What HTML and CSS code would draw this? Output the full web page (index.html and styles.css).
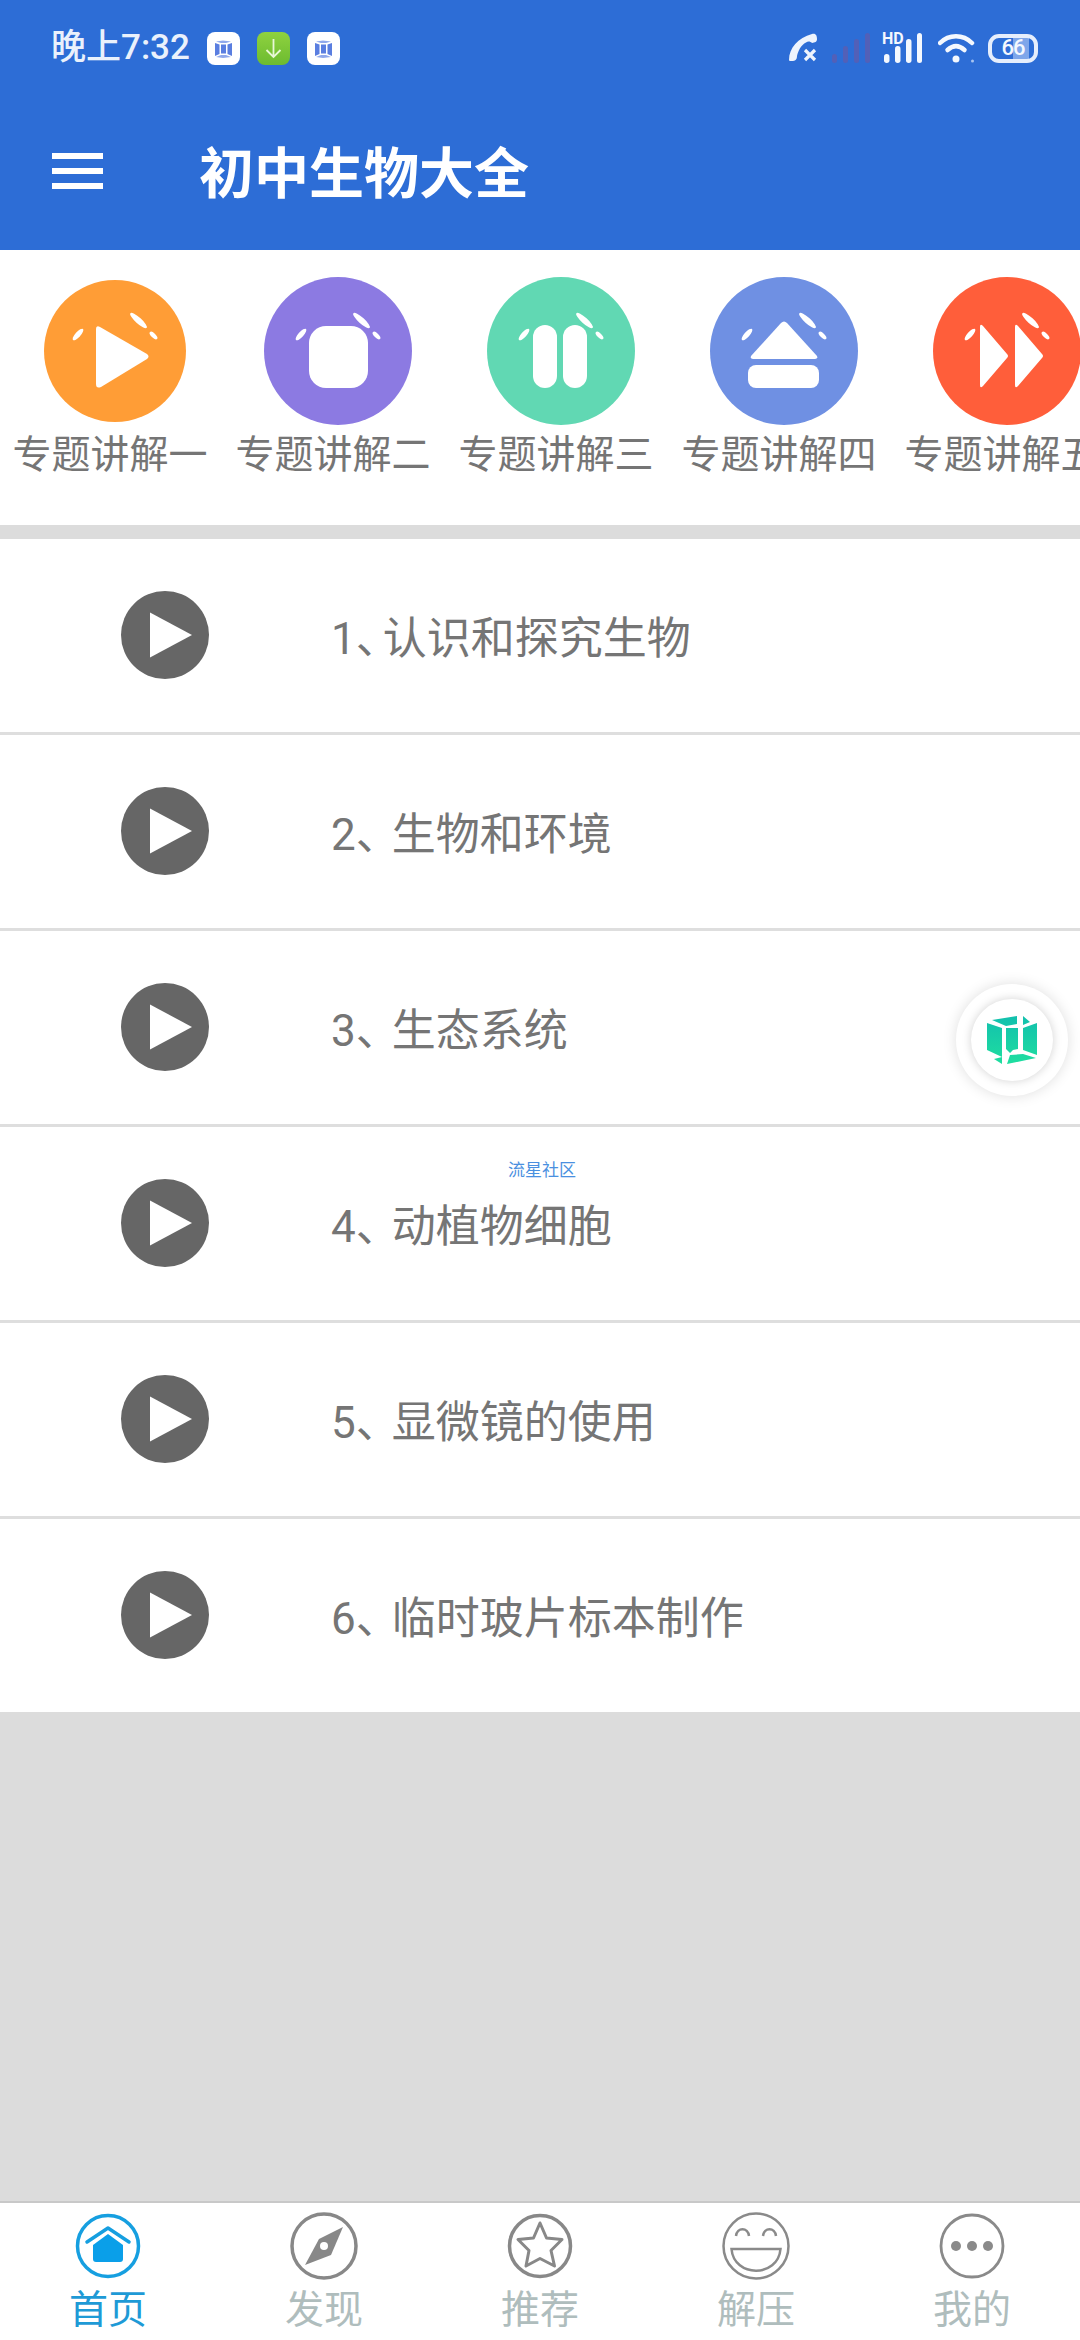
FILE: index.html
```html
<!DOCTYPE html>
<html lang="zh-CN">
<head>
<meta charset="utf-8">
<title>初中生物大全</title>
<link rel="stylesheet" href="styles.css">
</head>
<body>
<svg class="defs" width="0" height="0" aria-hidden="true">
  <defs>
    <linearGradient id="cubeGrad" gradientUnits="userSpaceOnUse" x1="0" y1="0" x2="0" y2="50">
      <stop offset="0" stop-color="#12bfae"/>
      <stop offset="1" stop-color="#1fdf9f"/>
    </linearGradient>
    <linearGradient id="greenGrad" x1="0" y1="0" x2="0" y2="1">
      <stop offset="0" stop-color="#8fd23f"/>
      <stop offset="1" stop-color="#6cbb30"/>
    </linearGradient>
    <symbol id="gloss" viewBox="-74 -74 148 148">
      <ellipse cx="23.500" cy="-30.500" rx="11" ry="3" transform="rotate(42 23.500 -30.500)" fill="#fff"/>
      <ellipse cx="38.500" cy="-15.500" rx="5" ry="2.200" transform="rotate(45 38.500 -15.500)" fill="#fff"/>
      <ellipse cx="-37" cy="-16.500" rx="7.500" ry="2.600" transform="rotate(-48 -37 -16.500)" fill="#fff"/>
    </symbol>
    <symbol id="play" viewBox="0 0 88 88">
      <circle cx="44" cy="44" r="44" fill="#666"/>
      <path d="M29 21.500 L71 44 L29 66.500Z" fill="#fff"/>
    </symbol>
    <symbol id="cube" viewBox="0 0 52 50">
      <path d="M1 8 L16 13 V42 L1 35Z M37 13 L51 8 V40 L37 35Z" fill="url(#cubeGrad)"/>
      <path d="M6 5 L31 1 V9 L20 11Z M37 1 L44 7 L37 10Z" fill="url(#cubeGrad)"/>
      <path d="M20 13 H32 V34 L27 35 L24 38 L20 34Z" fill="url(#cubeGrad)"/>
      <path d="M8 44 L16 42 V49Z M21 49 L24 40 L37 39 L50 43Z" fill="url(#cubeGrad)"/>
    </symbol>
    <symbol id="miniCube" viewBox="0 0 33 33">
      <path d="M8 11 L12.500 12.500 V22 L8 24Z M25 11 L20.500 12.500 V22 L25 24Z M14 12.500 H19 V21.500 H14Z" fill="#5a7ee0"/>
      <path d="M9 9.500 L16 8.500 L24 9.500 L19 11 H14Z M9 25 L14 23 H19 L24 25 L16 26Z" fill="#8fa8ec"/>
    </symbol>
  </defs>
</svg>

<div class="app">
  <header class="header">
    <div class="status">
      <div class="status-left">
        <span class="time">晚上7:32</span>
        <svg class="note" viewBox="0 0 33 33"><rect width="33" height="33" rx="8" fill="#fff"/><use href="#miniCube" width="33" height="33"/></svg>
        <svg class="note" viewBox="0 0 33 33"><rect width="33" height="33" rx="8" fill="url(#greenGrad)"/><path d="M16.500 7 V25 M9.500 18 L16.500 25 L23.500 18" stroke="#e8f7d6" stroke-width="1.800" fill="none"/></svg>
        <svg class="note" viewBox="0 0 33 33"><rect width="33" height="33" rx="8" fill="#fff"/><use href="#miniCube" width="33" height="33"/></svg>
      </div>
      <div class="status-right">
        <svg class="phone" viewBox="0 0 30 30" width="30" height="30"><path d="M1 27 C1 15 10 5 24 1 C28 0 29 3 29 6 C29 9 27 9.500 24 10 C22 8 20 8 18 9.500 C13 12 10 18 9 23 C9 27 7 28 4 28 C2 28 1 28 1 27Z" fill="#eef4fd"/><path d="M17 17 L27 27 M27 17 L17 27" stroke="#eef4fd" stroke-width="3.200"/></svg>
        <svg class="bars-dim" viewBox="0 0 38 30" width="38" height="30"><g fill="#5260b8"><rect x="0" y="21" width="5" height="9" rx="2.500"/><rect x="11" y="13" width="5" height="17" rx="2.500"/><rect x="22" y="6" width="5" height="24" rx="2.500"/><rect x="33" y="0" width="5" height="30" rx="2.500"/></g></svg>
        <span class="signal">
          <span class="hd">HD</span>
          <svg class="bars" viewBox="0 0 40 30" width="40" height="30"><g fill="#f4f8fe"><rect x="2" y="21" width="5.500" height="9" rx="2.700"/><rect x="13" y="13" width="5.500" height="17" rx="2.700"/><rect x="24" y="6" width="5.500" height="24" rx="2.700"/><rect x="35" y="0" width="5" height="30" rx="2.500"/></g></svg>
        </span>
        <svg class="wifi" viewBox="0 0 38 30" width="38" height="30"><path d="M2 10 C11 1 25 1 34 10" stroke="#f4f8fe" stroke-width="4.500" stroke-linecap="round" fill="none"/><path d="M9.500 17 C15 12 21 12 26.500 17" stroke="#f4f8fe" stroke-width="4.500" stroke-linecap="round" fill="none"/><circle cx="18" cy="26" r="3.500" fill="#f4f8fe"/><circle cx="34.500" cy="28" r="1.500" fill="#a9c4f0"/></svg>
        <span class="battery">66</span>
      </div>
    </div>
    <div class="toolbar">
      <div class="menu"><i></i><i></i><i></i></div>
      <h1 class="title">初中生物大全</h1>
    </div>
  </header>

  <nav class="topics">
    <div class="topic">
      <svg class="topic-icon" viewBox="-74 -74 148 148"><circle r="71" fill="#ff9d36"/><path d="M-19 -22 Q-19 -26 -15 -24 L32 3 Q35 5.500 32 8 L-14 36 Q-19 38 -19 33Z" fill="#fff"/><use href="#gloss" x="-74" y="-74" width="148" height="148"/></svg>
      <span class="topic-label">专题讲解一</span>
    </div>
    <div class="topic">
      <svg class="topic-icon" viewBox="-74 -74 148 148"><circle r="74" fill="#8c7ae2"/><rect x="-29" y="-25" width="59" height="62" rx="17" fill="#fff"/><use href="#gloss" x="-74" y="-74" width="148" height="148"/></svg>
      <span class="topic-label">专题讲解二</span>
    </div>
    <div class="topic">
      <svg class="topic-icon" viewBox="-74 -74 148 148"><circle r="74" fill="#61d8b3"/><rect x="-28" y="-26" width="24" height="63" rx="12" fill="#fff"/><rect x="2" y="-26" width="24" height="63" rx="12" fill="#fff"/><use href="#gloss" x="-74" y="-74" width="148" height="148"/></svg>
      <span class="topic-label">专题讲解三</span>
    </div>
    <div class="topic">
      <svg class="topic-icon" viewBox="-74 -74 148 148"><circle r="74" fill="#6f90e3"/><path d="M-3 -28 Q0 -31 3 -28 L33 5 Q34 8 31 8 H-31 Q-34 8 -33 5Z" fill="#fff"/><rect x="-36" y="14" width="71" height="23" rx="8" fill="#fff"/><use href="#gloss" x="-74" y="-74" width="148" height="148"/></svg>
      <span class="topic-label">专题讲解四</span>
    </div>
    <div class="topic">
      <svg class="topic-icon" viewBox="-74 -74 148 148"><circle r="74" fill="#ff5e3a"/><path d="M-27 -24 Q-27 -28 -24 -25 L0 3 Q2 5 0 7 L-24 35 Q-27 38 -27 34Z M8 -24 Q8 -28 11 -25 L35 3 Q37 5 35 7 L11 35 Q8 38 8 34Z" fill="#fff"/><use href="#gloss" x="-74" y="-74" width="148" height="148"/></svg>
      <span class="topic-label">专题讲解五</span>
    </div>
  </nav>

  <main class="list">
    <div class="row"><svg class="play"><use href="#play"/></svg><span class="row-text">1<span class="sep tight">、</span>认识和探究生物</span></div>
    <div class="row"><svg class="play"><use href="#play"/></svg><span class="row-text">2<span class="sep">、</span>生物和环境</span></div>
    <div class="row"><svg class="play"><use href="#play"/></svg><span class="row-text">3<span class="sep">、</span>生态系统</span></div>
    <div class="row"><svg class="play"><use href="#play"/></svg><span class="row-text">4<span class="sep">、</span>动植物细胞</span></div>
    <div class="row"><svg class="play"><use href="#play"/></svg><span class="row-text">5<span class="sep">、</span>显微镜的使用</span></div>
    <div class="row"><svg class="play"><use href="#play"/></svg><span class="row-text">6<span class="sep">、</span>临时玻片标本制作</span></div>
  </main>

  <footer class="tabs">
    <div class="tab active">
      <svg class="tab-icon" viewBox="0 0 68 68"><circle cx="34" cy="34" r="30.500" fill="none" stroke="#169fe0" stroke-width="3.500"/><path d="M13 30 L34 16 L55 30" fill="none" stroke="#169fe0" stroke-width="3.500" stroke-linecap="round" stroke-linejoin="round"/><path d="M19 33 L34 22 L49 33 V47 Q49 50 46 50 H22 Q19 50 19 47Z" fill="#0a9fe9"/></svg>
      <span class="tab-label">首页</span>
    </div>
    <div class="tab">
      <svg class="tab-icon" viewBox="0 0 68 68"><circle cx="34" cy="34" r="32" fill="none" stroke="#888" stroke-width="3.500"/><path d="M53 15 L41 43 L15 53 L29 27Z" fill="#888"/><circle cx="34" cy="34" r="4" fill="#fff"/></svg>
      <span class="tab-label">发现</span>
    </div>
    <div class="tab">
      <svg class="tab-icon" viewBox="0 0 68 68"><circle cx="34" cy="34" r="30.500" fill="none" stroke="#888" stroke-width="3.500"/><path d="M34 11 L40.500 26 L56 27.500 L45 38.500 L48.500 54 L34 46.500 L20 54 L23 38.500 L12 27.500 L27.500 26Z" fill="none" stroke="#888" stroke-width="3" stroke-linejoin="round"/></svg>
      <span class="tab-label">推荐</span>
    </div>
    <div class="tab">
      <svg class="tab-icon" viewBox="0 0 68 68"><circle cx="34" cy="34" r="32.500" fill="none" stroke="#8a8a8a" stroke-width="2.500"/><path d="M14 24 C15 15 26 15 27 24 M41 24 C42 15 53 15 54 24" fill="none" stroke="#8a8a8a" stroke-width="2.500"/><path d="M9.500 37 H58.500 C56 66 12 66 9.500 37Z" fill="none" stroke="#8a8a8a" stroke-width="2.500"/></svg>
      <span class="tab-label">解压</span>
    </div>
    <div class="tab">
      <svg class="tab-icon" viewBox="0 0 68 68"><circle cx="34" cy="34" r="31" fill="none" stroke="#8a8a8a" stroke-width="2.800"/><circle cx="18" cy="34" r="5" fill="#8a8a8a"/><circle cx="34" cy="34" r="5" fill="#8a8a8a"/><circle cx="50" cy="34" r="5" fill="#8a8a8a"/></svg>
      <span class="tab-label">我的</span>
    </div>
  </footer>

  <span class="watermark">流星社区</span>
  <div class="float-btn"><div class="float-disc"><svg class="float-cube"><use href="#cube"/></svg></div></div>
</div>
</body>
</html>
```

FILE: styles.css
```css
* { box-sizing: border-box; }

html, body {
  margin: 0;
  padding: 0;
}

body {
  font-family: Roboto, "Noto Sans CJK SC", sans-serif;
  background: #dcdcdc;
}

.defs { position: absolute; }

.app {
  position: relative;
  width: 1080px;
  height: 2340px;
  display: flex;
  flex-direction: column;
  overflow: hidden;
  background: #dcdcdc;
}

/* Header */
.header {
  height: 250px;
  flex: none;
  background: #2d6dd6;
  color: #fff;
}

.status {
  height: 96px;
  padding: 0 42px 0 51px;
  display: flex;
  align-items: center;
  justify-content: space-between;
}

.status-left {
  display: flex;
  align-items: center;
  gap: 17px;
}

.time {
  font-size: 35px;
  line-height: 40px;
  font-weight: 500;
  color: #eaf1fc;
}

.note {
  width: 33px;
  height: 33px;
  display: block;
}

.status-right {
  display: flex;
  align-items: center;
  height: 30px;
}

.phone { margin-right: 14px; display: block; }
.bars-dim { margin-right: 12px; display: block; }
.signal { position: relative; display: block; width: 40px; height: 30px; margin-right: 16px; }
.bars { display: block; }

.hd {
  position: absolute;
  left: 0;
  top: -2px;
  font-size: 16px;
  line-height: 16px;
  font-weight: 700;
  color: #f4f8fe;
}

.wifi { margin-right: 12px; display: block; }

.battery {
  width: 50px;
  height: 29px;
  border: 4.500px solid #e6eefc;
  border-radius: 11px;
  background: linear-gradient(90deg, transparent 50%, #7fa6ea 50%, #7fa6ea 88%, transparent 88%);
  color: #f4f8fe;
  font-size: 22px;
  line-height: 20px;
  font-weight: 500;
  letter-spacing: -1px;
  text-align: center;
  display: block;
}

.toolbar {
  height: 154px;
  padding-left: 52px;
  display: flex;
  align-items: center;
}

.menu {
  width: 51px;
  height: 36px;
  display: flex;
  flex-direction: column;
  justify-content: space-between;
  margin-right: 96px;
  margin-top: -4px;
}

.menu i {
  display: block;
  height: 6px;
  background: #fff;
}

.title {
  margin: 2px 0 0;
  font-size: 55px;
  line-height: 60px;
  font-weight: 700;
}

/* Topic strip */
.topics {
  height: 275px;
  flex: none;
  background: #fff;
  display: flex;
  overflow: hidden;
}

.topic {
  flex: none;
  width: 223px;
  height: 100%;
  display: flex;
  flex-direction: column;
  align-items: center;
  padding-top: 27px;
}

.topic-icon {
  width: 148px;
  height: 148px;
  display: block;
  flex: none;
  margin-left: 7px;
}

.topic-label {
  margin-top: 5px;
  padding-right: 3px;
  font-size: 39px;
  line-height: 50px;
  color: #757575;
  white-space: nowrap;
}

/* List */
.list {
  margin-top: 14px;
  flex: 1;
}

.row {
  height: 196px;
  background: #fff;
  border-bottom: 3px solid #dedede;
  padding-left: 121px;
  padding-bottom: 1px;
  display: flex;
  align-items: center;
  gap: 122px;
}

.row:last-child {
  height: 193px;
  border-bottom: 0;
}

.play {
  width: 88px;
  height: 88px;
  display: block;
  flex: none;
}

.row-text {
  font-size: 44px;
  line-height: 56px;
  color: #757575;
  margin-top: 8px;
}

.sep {
  font-feature-settings: "halt" 1;
  margin-right: 14px;
}

.sep.tight { margin-right: 5px; }

/* Bottom tabs */
.tabs {
  height: 139px;
  flex: none;
  background: #fff;
  border-top: 2px solid #c8c8c8;
  display: grid;
  grid-template-columns: repeat(5, 216px);
}

.tab {
  display: flex;
  flex-direction: column;
  align-items: center;
  padding-top: 9px;
}

.tab-icon {
  width: 68px;
  height: 68px;
  display: block;
  flex: none;
}

.tab-label {
  font-size: 39px;
  line-height: 48px;
  margin-top: 6px;
  color: #afbdbd;
}

.tab.active .tab-label { color: #1e9ad6; }

/* Overlays */
.watermark {
  position: absolute;
  left: 508px;
  top: 1160px;
  font-size: 17px;
  line-height: 20px;
  color: #4a90e0;
}

.float-btn {
  position: absolute;
  left: 956px;
  top: 984px;
  width: 112px;
  height: 112px;
  border-radius: 50%;
  background: #fff;
  box-shadow: 0 0 14px rgba(0, 0, 0, 0.13);
  display: flex;
  align-items: center;
  justify-content: center;
}

.float-disc {
  width: 82px;
  height: 82px;
  border-radius: 50%;
  background: #fff;
  box-shadow: 0 0 10px rgba(0, 0, 0, 0.18);
  display: flex;
  align-items: center;
  justify-content: center;
}

.float-cube {
  width: 52px;
  height: 50px;
  display: block;
}
```
